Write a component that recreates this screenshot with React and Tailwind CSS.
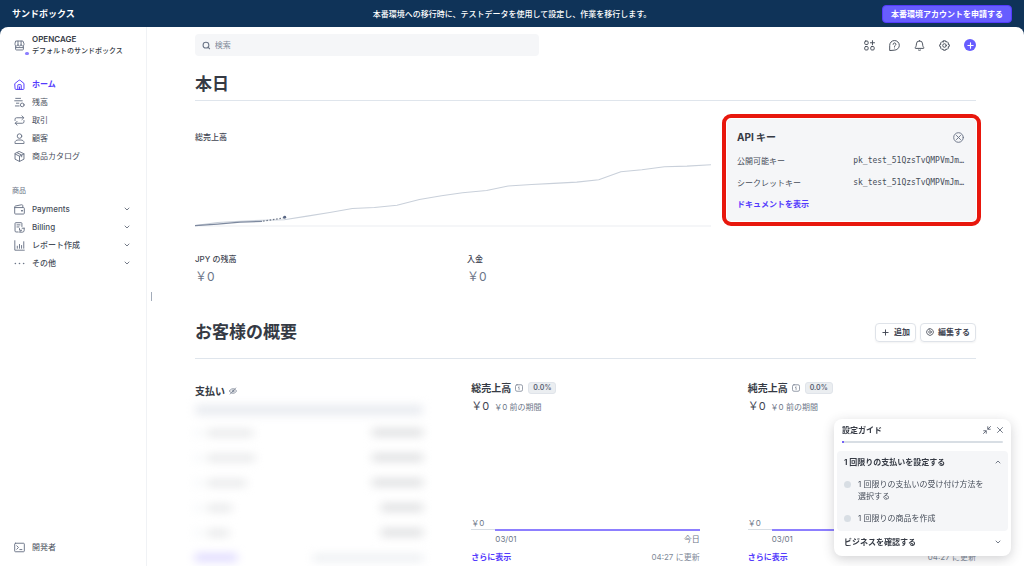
import React from 'react';
import { ChevronDown, ChevronUp, Plus, Search, X } from 'lucide-react';

function Icon({ children, className = 'w-[11px] h-[11px]' }) {
  return (
    <svg
      viewBox="0 0 16 16"
      fill="none"
      stroke="currentColor"
      strokeWidth="1.4"
      strokeLinecap="round"
      strokeLinejoin="round"
      aria-hidden="true"
      className={`shrink-0 ${className}`}
    >
      {children}
    </svg>
  );
}

const HomeIcon = () => (
  <Icon>
    <path d="M1.500 6.500 7 2a1.600 1.600 0 0 1 2 0l5.500 4.500V14a1.200 1.200 0 0 1-1.200 1.200H2.700A1.200 1.200 0 0 1 1.500 14z" />
    <path d="M5.500 15V9a.8.8 0 0 1 .8-.8h3.400a.8.8 0 0 1 .8.8v6M8 11.500V15" />
  </Icon>
);

const BalanceIcon = () => (
  <Icon>
    <path d="M2.5 2h7M1 5.5h11M3.5 9H7M2 13h5.5" />
    <circle cx="12" cy="11.5" r="2.7" />
  </Icon>
);

const TransactionsIcon = () => (
  <Icon>
    <path d="M1.5 8V6.2A2.2 2.2 0 0 1 3.7 4H14M11.5 1.2 14.3 4l-2.8 2.8" />
    <path d="M14.5 8v1.8a2.2 2.2 0 0 1-2.2 2.2H2M4.5 9.2 1.7 12l2.8 2.8" />
  </Icon>
);

const CustomersIcon = () => (
  <Icon>
    <circle cx="8" cy="4.5" r="3.3" />
    <path d="M1.5 14.8v-1.3c0-1.8 2-3.3 4.500-3.300h4c2.500 0 4.500 1.500 4.500 3.300v1.300z" />
  </Icon>
);

const CatalogIcon = () => (
  <Icon>
    <path d="m8 .9 6.500 3.200v7.800L8 15.200l-6.500-3.300V4.100zM1.500 4.300 8 7.600l6.500-3.300M8 7.600v7.400M4.700 2.600l6.500 3.300v2.600" />
  </Icon>
);

const PaymentsIcon = () => (
  <Icon>
    <path d="M1 5.200h12.800A1.200 1.200 0 0 1 15 6.400v7a1.200 1.200 0 0 1-1.200 1.200H2.200A1.200 1.200 0 0 1 1 13.400V4.300c0-.7.4-1.200 1.100-1.400l9-1.800c.9-.2 1.700.4 1.700 1.300v2.600" />
    <path d="M11 9.800h1.200" strokeWidth="2" />
  </Icon>
);

const BillingIcon = () => (
  <Icon>
    <path d="M6 14.500H3A1.500 1.500 0 0 1 1.500 13V2a1 1 0 0 1 1-1h8a1 1 0 0 1 1 1v4.500M4.300 4.200h4.400M4.300 7.200h3" />
    <path d="M14.800 9v3a2.800 2.800 0 0 1-2.800 2.800H8.500M10 12.500l-2 2.200M8 9.500V12h3M11.800 9h3" />
  </Icon>
);

const ReportsIcon = () => (
  <Icon>
    <path d="M1.200 1v13.800H15M4.800 9v3M8 6.500V12M11 8v4M14.200 2.500V12" />
  </Icon>
);

const MoreIcon = () => (
  <Icon>
    <path d="M2 8h.01M8 8h.01M14 8h.01" strokeWidth="2.4" />
  </Icon>
);

const StoreIcon = () => (
  <Icon>
    <path d="M3 1.500h10l1.500 4v1a2 2 0 0 1-4.200 0 2.200 2.200 0 0 1-4.500 0 2 2 0 0 1-4.300 0v-1zM5.800 1.500v5M10.300 1.500v5M2.300 9v4.200a1.300 1.300 0 0 0 1.300 1.300h8.800a1.300 1.300 0 0 0 1.300-1.300V9M2.500 11h11" />
  </Icon>
);

const TerminalIcon = () => (
  <Icon>
    <rect x="1" y="1.8" width="14" height="12.4" rx="1.2" />
    <path d="M4 5.500 6.500 8 4 10.500M8.500 11h3" />
  </Icon>
);

const AppsIcon = () => (
  <Icon>
    <rect x="1" y="1.5" width="5" height="5" rx="1.5" />
    <rect x="1" y="9.5" width="5" height="5" rx="1.5" />
    <rect x="9.8" y="9.5" width="5" height="5" rx="1.5" />
    <path d="M12.300 1v6M9.300 4h6" />
  </Icon>
);

const HelpIcon = () => (
  <Icon>
    <path d="M1 14.800V8a7 7 0 1 1 7 6.800z" />
    <path d="M6 6.300a2 2 0 1 1 3 1.700c-.6.4-1 .7-1 1.400M8 11.600v.01" />
  </Icon>
);

const BellIcon = () => (
  <Icon>
    <path d="M8 1.200a4.500 4.500 0 0 0-4.500 4.500c0 3-1 4.500-1.800 5.500-.3.500 0 1 .5 1h11.600c.5 0 .8-.5.500-1-.8-1-1.800-2.500-1.800-5.500A4.500 4.500 0 0 0 8 1.200zM6.300 14.500c.8.8 2.600.8 3.400 0" />
  </Icon>
);

const GearIcon = ({ className }) => (
  <Icon className={className}>
    <path d="M6.500 1.200h3l.5 1.700 1.800-.5 2 2-.6 1.800 1.800.6v2.500l-1.800.7.6 1.700-2 2-1.800-.5-.5 1.700h-3L6 13.200l-1.800.5-2-2 .6-1.700L1 9.300V6.800l1.800-.6-.6-1.800 2-2 1.800.5z" />
    <circle cx="8" cy="8" r="2.6" />
  </Icon>
);

const CloseCircleIcon = () => (
  <Icon>
    <circle cx="8" cy="8" r="7" />
    <path d="m5 5 6 6M11 5l-6 6" />
  </Icon>
);

const HiddenIcon = () => (
  <Icon className="w-[8px] h-[8px]">
    <path d="M1 8c1.500-3 4-4.500 7-4.500S13.500 5 15 8c-1.500 3-4 4.500-7 4.500S2.500 11 1 8zM13.500 2l-11 12" />
    <circle cx="8" cy="8" r="2" />
  </Icon>
);

const InfoIcon = () => (
  <Icon className="w-[8px] h-[8px]">
    <rect x="1" y="1.5" width="14" height="13" rx="3" />
    <path d="M7 7h1.200v4M8 4.500v.01" />
  </Icon>
);

const CollapseIcon = () => (
  <Icon className="w-[8px] h-[8px]">
    <path d="M15 1 10 6M9.500 1.500v5h5M1 15l5-5M1.500 9.500h5v5" strokeWidth="1.8" />
  </Icon>
);

const mainMenu = [
  { label: 'ホーム', icon: HomeIcon, active: true },
  { label: '残高', icon: BalanceIcon },
  { label: '取引', icon: TransactionsIcon },
  { label: '顧客', icon: CustomersIcon },
  { label: '商品カタログ', icon: CatalogIcon },
];

const productMenu = [
  { label: 'Payments', icon: PaymentsIcon },
  { label: 'Billing', icon: BillingIcon },
  { label: 'レポート作成', icon: ReportsIcon },
  { label: 'その他', icon: MoreIcon },
];

const apiKeys = [
  { label: '公開可能キー', value: 'pk_test_51QzsTvQMPVmJm…' },
  { label: 'シークレットキー', value: 'sk_test_51QzsTvQMPVmJm…' },
];

const hiddenRows = [
  { id: 1, name: 'w-[46px]', amount: 'w-[51px]' },
  { id: 2, name: 'w-[48px]', amount: 'w-[51px]' },
  { id: 3, name: 'w-[39px]', amount: 'w-[51px]' },
  { id: 4, name: 'w-[25px]', amount: 'w-[42px]' },
  { id: 5, name: 'w-[22px]', amount: 'w-[42px]' },
];

function Banner() {
  return (
    <header className="grid grid-cols-[1fr_auto_1fr] items-center h-[27px] px-3 text-white">
      <span className="text-[9px] font-bold">サンドボックス</span>
      <p className="text-[8px] font-medium">
        本番環境への移行時に、テストデータを使用して設定し、作業を移行します。
      </p>
      <button className="justify-self-end h-[18px] px-2 rounded bg-[#675dff] border border-[#533afd] text-[8px] leading-4 font-bold">
        本番環境アカウントを申請する
      </button>
    </header>
  );
}

function Sidebar() {
  return (
    <aside className="flex flex-col shrink-0 w-[147px] border-r border-[#f0f2f5] text-[#474e5a]">
      <button className="flex items-center gap-[7px] pl-[14px] pt-[6px] text-left">
        <span className="relative text-[#6c7688]">
          <StoreIcon />
          <span className="absolute -right-1 -bottom-1 w-1 h-[3px] rounded-full bg-[#8d7fff]" />
        </span>
        <span className="text-[7px] leading-3 font-medium text-[#353a44]">
          <span className="block text-[8px] font-semibold">OPENCAGE</span>
          デフォルトのサンドボックス
        </span>
      </button>

      <nav className="mt-[18px] text-[8px] leading-[18px]">
        {mainMenu.map((item) => (
          <a
            key={item.label}
            href="#"
            className={`flex items-center gap-[7px] pl-[14px] ${
              item.active ? 'font-bold text-[#533afd]' : ''
            }`}
          >
            <span className={item.active ? 'text-[#533afd]' : 'text-[#6c7688]'}>
              <item.icon />
            </span>
            {item.label}
          </a>
        ))}

        <h2 className="mt-[17px] pl-3 text-[7px] text-[#6c7688]">商品</h2>
        {productMenu.map((item) => (
          <button
            key={item.label}
            className="flex items-center gap-[7px] w-full pl-[14px] pr-[15px] font-medium"
          >
            <span className="text-[#6c7688]">
              <item.icon />
            </span>
            {item.label}
            <ChevronDown className="w-2 h-2 ml-auto text-[#596171]" strokeWidth={2.5} />
          </button>
        ))}
      </nav>

      <a href="#" className="flex items-center gap-[7px] mt-auto mb-[10px] pl-[14px] text-[8px] leading-[18px]">
        <span className="text-[#6c7688]">
          <TerminalIcon />
        </span>
        開発者
      </a>
    </aside>
  );
}

function Toolbar() {
  return (
    <div className="flex items-center justify-between">
      <label className="flex items-center gap-1 w-[44%] h-[22px] px-[7px] rounded bg-[#f5f6f8] text-[#6c7688]">
        <Search className="w-[9px] h-[9px]" strokeWidth={3} />
        <input
          type="search"
          aria-label="検索"
          placeholder="検索"
          className="w-full bg-transparent text-[8px] outline-none placeholder:text-[#818a99]"
        />
      </label>
      <div className="flex items-center gap-[14px] text-[#474e5a]">
        <button aria-label="アプリ"><AppsIcon /></button>
        <button aria-label="ヘルプ"><HelpIcon /></button>
        <button aria-label="通知"><BellIcon /></button>
        <button aria-label="設定"><GearIcon /></button>
        <button aria-label="作成" className="flex items-center justify-center w-3 h-3 rounded-full bg-[#675dff] text-white">
          <Plus className="w-[9px] h-[9px]" strokeWidth={3} />
        </button>
      </div>
    </div>
  );
}

function SalesChart() {
  return (
    <svg viewBox="0 0 515 66" preserveAspectRatio="none" className="block w-full h-[64px] mt-[18px]" fill="none">
      <path d="M0 65H515" stroke="#ebeef1" />
      <path
        d="M0 64.5 22.5 61.4 45 60 67 59 89 58.6 112 54.8 134.5 51 157 47 179 45.9 201.6 43.5 224 37.6 246 33.8 267 30.7 291 28.3 312.5 23.8 336 22.1 358 21 381 19.7 403 17.3 425 9 446 7 468.5 3.9 491 3.2 515 1.8"
        stroke="#c9d0da"
        strokeWidth="1.1"
      />
      <path d="M0 64.6 22.5 63 45 61 67 60.2" stroke="#7d899f" strokeWidth="1.3" />
      <path d="M68 60 89 56.5" stroke="#6c7688" strokeWidth="1.2" strokeDasharray="1.5 1.8" />
      <circle cx="89.5" cy="56" r="1.5" fill="#596785" />
    </svg>
  );
}

function ApiKeys() {
  return (
    <section className="w-[249px] pl-[10px] pr-3 pt-[10px] pb-[9px] rounded bg-[#f5f6f8] text-[#474e5a] outline-4 outline-offset-1 outline-[#e8170d]">
      <div className="flex items-center justify-between leading-4">
        <h3 className="text-[10px] font-bold text-[#353a44]">API キー</h3>
        <button aria-label="閉じる" className="text-[#6c7688]"><CloseCircleIcon /></button>
      </div>
      <dl className="mt-2 space-y-[6px]">
        {apiKeys.map((key) => (
          <div key={key.label} className="flex justify-between text-[8px] leading-4">
            <dt>{key.label}</dt>
            <dd className="font-['DejaVu_Sans_Mono',monospace]">{key.value}</dd>
          </div>
        ))}
      </dl>
      <a href="#" className="block mt-[5px] text-[8px] leading-4 font-bold text-[#533afd]">
        ドキュメントを表示
      </a>
    </section>
  );
}

function Stat({ label }) {
  return (
    <div className="w-[272px]">
      <h3 className="text-[8px] leading-4 font-medium text-[#414552]">{label}</h3>
      <p className="mt-px text-[12px] leading-[18px] text-[#6c7688]">￥0</p>
    </div>
  );
}

function HiddenPayments() {
  return (
    <section className="pt-[3px]">
      <h3 className="flex items-center gap-1 text-[10px] leading-4 font-bold text-[#353a44]">
        支払い
        <span className="text-[#6c7688]"><HiddenIcon /></span>
      </h3>
      <div className="mt-[6px] blur-[5px]" aria-hidden="true">
        <div className="h-[10px] mb-[5px] rounded bg-[#e8ebf0]" />
        {hiddenRows.map((row) => (
          <div key={row.id} className="flex items-center h-[25px]">
            <span className="w-[6px] h-[6px] mr-[6px] rounded-full bg-[#edf1f5]" />
            <span className={`h-[6px] bg-[#e2e3e5] ${row.name}`} />
            <span className={`h-[7px] ml-auto bg-[#dadbdd] ${row.amount}`} />
          </div>
        ))}
        <div className="flex items-center justify-between h-[25px]">
          <span className="w-[42px] h-[7px] bg-[#d9d3ff]" />
          <span className="w-[110px] h-[6px] bg-[#e8ebef]" />
        </div>
      </div>
    </section>
  );
}

function MetricCard({ title }) {
  return (
    <section className="text-[#6c7688]">
      <h3 className="flex items-center gap-1 text-[10px] leading-4 font-bold text-[#353a44]">
        {title}
        <span className="text-[#6c7688]"><InfoIcon /></span>
        <span className="ml-px px-1 rounded-[3px] border border-[#e0e4ea] bg-[#ebeef1] text-[7px] leading-[10px] font-semibold text-[#596171]">
          0.0%
        </span>
      </h3>
      <p className="mt-[2px] text-[8px] leading-4">
        <span className="mr-[5px] text-[11px] text-[#414552]">￥0</span>
        ￥0 前の期間
      </p>
      <div className="mt-[102px] text-[8px] leading-3">
        <div>￥0</div>
        <div className="flex items-start">
          <div className="w-6 h-px bg-[#d8dee4]" />
          <div className="flex-1 h-[2px] bg-[#8d7fff]" />
        </div>
        <div className="flex justify-between ml-6 mt-[2px]">
          <span>03/01</span>
          <span>今日</span>
        </div>
      </div>
      <div className="flex justify-between mt-1 text-[8px] leading-4">
        <a href="#" className="font-bold text-[#533afd]">さらに表示</a>
        <span className="text-[#818a99]">04:27 に更新</span>
      </div>
    </section>
  );
}

function SetupGuide() {
  return (
    <section className="fixed right-[13px] bottom-[10px] w-[177px] px-[3px] pt-[3px] pb-[6px] rounded-lg bg-white text-[8px] text-[#474e5a] shadow-[0_3px_12px_rgba(48,49,61,0.22)]">
      <div className="flex items-center gap-1 pl-[5px] pr-[3px] leading-4 text-[#596171]">
        <h3 className="mr-auto font-bold text-[#353a44]">設定ガイド</h3>
        <button aria-label="縮小"><CollapseIcon /></button>
        <button aria-label="閉じる"><X className="w-[10px] h-[10px]" strokeWidth={2} /></button>
      </div>
      <div className="mx-[5px] mt-[3px] h-[2px] rounded-full bg-[#d8dee4]">
        <div className="w-[2px] h-[2px] rounded-full bg-[#533afd]" />
      </div>
      <div className="mt-2 pl-[7px] pr-[6px] pt-[3px] pb-[7px] rounded bg-[#f5f6f8]">
        <button className="flex items-center justify-between w-full leading-4 font-bold text-[#353a44]">
          1 回限りの支払いを設定する
          <ChevronUp className="w-2 h-2 text-[#596171]" strokeWidth={2.5} />
        </button>
        <ul className="mt-2 space-y-[10px] leading-3">
          {['1 回限りの支払いの受け付け方法を選択する', '1 回限りの商品を作成'].map((task) => (
            <li key={task} className="flex gap-[7px] pr-3">
              <span className="shrink-0 w-[7px] h-[7px] mt-[3px] rounded-full bg-[#d8dee4]" />
              {task}
            </li>
          ))}
        </ul>
      </div>
      <button className="flex items-center justify-between w-full mt-[3px] pl-[7px] pr-[6px] leading-4 font-bold text-[#353a44]">
        ビジネスを確認する
        <ChevronDown className="w-2 h-2 text-[#596171]" strokeWidth={2.5} />
      </button>
    </section>
  );
}

export default function App() {
  return (
    <div
      lang="ja"
      className="flex flex-col h-screen overflow-hidden bg-[#0f3358] font-['Inter','Noto_Sans_CJK_JP',sans-serif]"
    >
      <Banner />
      <div className="flex flex-1 min-h-0 rounded-t-lg bg-white overflow-hidden">
        <Sidebar />
        {/* Resize handle */}
        <div className="flex items-center justify-end w-[5px] shrink-0">
          <span className="w-px h-[9px] bg-[#a3acba]" />
        </div>

        <main className="flex-1 min-w-0 pl-[43px] pr-12 pt-[7px]">
          <Toolbar />

          <h1 className="mt-4 pb-1 border-b border-[#dfe5ec] text-[17px] leading-6 font-bold text-[#353a44]">本日</h1>
          <div className="flex gap-4 mt-[18px]">
            <div className="flex-1 min-w-0 pt-[10px]">
              <h3 className="text-[8px] leading-4 font-medium text-[#414552]">総売上高</h3>
              <SalesChart />
            </div>
            <div>
              <ApiKeys />
            </div>
          </div>
          <div className="flex mt-6">
            <Stat label="JPY の残高" />
            <Stat label="入金" />
          </div>

          <div className="flex items-center mt-[34px] pb-[14px] border-b border-[#dfe5ec]">
            <h2 className="mr-auto text-[17px] leading-6 font-bold text-[#353a44]">お客様の概要</h2>
            <div className="flex gap-1 text-[8px] font-bold text-[#414552]">
              <button className="flex items-center gap-1 h-[19px] px-[5px] rounded border border-[#dfe3e9] shadow-xs">
                <Plus className="w-[9px] h-[9px]" strokeWidth={2.5} />
                追加
              </button>
              <button className="flex items-center gap-1 h-[19px] px-[5px] rounded border border-[#dfe3e9] shadow-xs">
                <GearIcon className="w-[8px] h-[8px]" />
                編集する
              </button>
            </div>
          </div>
          <div className="grid grid-cols-3 gap-12 mt-[21px]">
            <HiddenPayments />
            <MetricCard title="総売上高" />
            <MetricCard title="純売上高" />
          </div>
        </main>
      </div>
      <SetupGuide />
    </div>
  );
}
